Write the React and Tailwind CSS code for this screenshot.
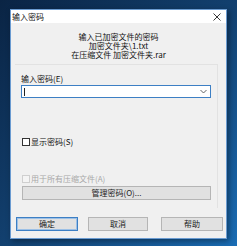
import React from 'react';

const font = { fontFamily: '"Noto Sans CJK SC", "Liberation Sans", sans-serif' };

const Btn = ({ children, primary, className = '' }) => (
  <div
    className={`h-[14px] flex items-center justify-center text-[8px] leading-none text-[#222] bg-[#e1e1e1] border ${
      primary ? 'border-[#3d7fc4] outline outline-1 outline-[#9cc0e6] -outline-offset-2' : 'border-[#b5b5b5]'
    } ${className}`}
  >
    {children}
  </div>
);

export default function App() {
  return (
    <div
      className="w-[237px] h-[246px] overflow-hidden pt-[9px] pl-[10px] bg-gradient-to-br from-[#0a2444] via-[#12406f] to-[#1a6db5]"
      style={font}
    >
      <div className="w-[217px] h-[230px] flex flex-col bg-[#f0f0f0] border border-[#6a9bd1] shadow-[2px_2px_6px_rgba(0,0,0,0.4)]">
        {/* Title bar */}
        <div className="h-[13px] shrink-0 bg-white flex items-center justify-between pl-[1px] pr-[4px]">
          <span className="text-[8px] leading-none text-[#111]">输入密码</span>
          <svg width="8" height="8" viewBox="0 0 8 8" className="mr-[1px]">
            <path d="M0.5 0.5 L7.5 7.5 M7.5 0.5 L0.5 7.5" stroke="#222" strokeWidth="0.9" />
          </svg>
        </div>

        {/* Header text */}
        <div className="pt-[9px] flex flex-col items-center text-[8px] leading-[9px] text-[#111]">
          <span>输入已加密文件的密码</span>
          <span>加密文件夹\1.txt</span>
          <span>在压缩文件 加密文件夹.rar</span>
        </div>

        {/* Group area */}
        <div className="mt-[5px] ml-[4px] mr-[8px] h-[144px] border-t border-r border-[#e2e2e2] flex flex-col px-[6px]">
          <div className="mt-[9px] text-[8px] leading-[9px] text-[#111]">输入密码(E)</div>
          <div className="mt-[2px] h-[13px] bg-white border border-[#3d7fc4] flex items-center justify-between pl-[2px] pr-[3px]">
            <div className="w-px h-[8px] bg-[#222]" />
            <svg width="7" height="5" viewBox="0 0 7 5">
              <path d="M0.5 1 L3.5 4 L6.5 1" fill="none" stroke="#555" strokeWidth="0.9" />
            </svg>
          </div>

          <div className="mt-[39px] flex items-center gap-[1px] pl-[1px]">
            <div className="w-[8px] h-[8px] bg-white border border-[#333]" />
            <span className="text-[8px] leading-[9px] text-[#111]">显示密码(S)</span>
          </div>

          <div className="mt-[28px] flex items-center gap-[1px] pl-[1px]">
            <div className="w-[8px] h-[8px] bg-[#f4f4f4] border border-[#cfcfcf]" />
            <span className="text-[8px] leading-[9px] text-[#a8a8a8]">用于所有压缩文件(A)</span>
          </div>

          <Btn className="mt-[3px] h-[13px] ml-[1px]">管理密码(O)...</Btn>
        </div>

        {/* Bottom buttons */}
        <div className="mt-[9px] flex items-center pl-[5px]">
          <Btn primary className="w-[62px]">确定</Btn>
          <Btn className="w-[60px] ml-[10px]">取消</Btn>
          <Btn className="w-[62px] ml-[13px]">帮助</Btn>
        </div>
      </div>
    </div>
  );
}
